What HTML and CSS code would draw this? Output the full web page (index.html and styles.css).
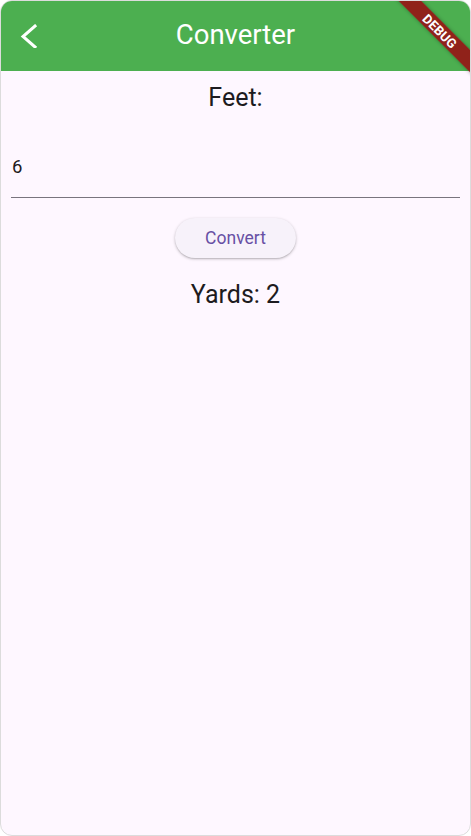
FILE: index.html
```html
<!DOCTYPE html>
<html>
<head>
<meta charset="utf-8">
<link rel="stylesheet" href="styles.css">
</head>
<body>
<div class="frame">
  <header class="appbar">
    <button class="back" aria-label="Back">
      <svg width="24" height="24" viewBox="0 0 24 24"><polyline points="16,2 4,12.5 16,23" fill="none" stroke="#fff" stroke-width="3" stroke-linecap="square"/></svg>
    </button>
    <h1 class="title">Converter</h1>
  </header>
  <div class="banner"><span>DEBUG</span></div>
  <main class="content">
    <div class="label">Feet:</div>
    <div class="field"><span class="value">6</span></div>
    <button class="convert">Convert</button>
    <div class="result">Yards: 2</div>
  </main>
</div>
</body>
</html>
```

FILE: styles.css
```css
* { box-sizing: border-box; }
html, body { margin: 0; padding: 0; background: #fff; }
body { font-family: Roboto, "Noto Sans", sans-serif; }

.frame {
  position: relative;
  width: 471px;
  height: 836px;
  border: 1px solid #dcdcdc;
  border-radius: 12px;
  overflow: hidden;
  background: #fef7ff;
  display: flex;
  flex-direction: column;
}

.appbar {
  height: 70px;
  background: #4caf50;
  display: flex;
  align-items: center;
  justify-content: center;
  position: relative;
  flex-shrink: 0;
}

.back {
  position: absolute;
  left: 18px;
  top: 23px;
  width: 24px;
  height: 24px;
  padding: 0;
  border: 0;
  background: none;
  display: flex;
}

.title {
  margin: 0;
  color: #fff;
  font-size: 27.5px;
  font-weight: 400;
  line-height: 1;
  position: relative;
  top: -1px;
}

.banner {
  position: absolute;
  top: 0;
  right: 0;
  width: 130px;
  height: 16px;
  background: rgba(150, 22, 22, 0.92);
  color: #fff;
  transform-origin: center;
  transform: translate(35px, 22px) rotate(45deg);
  display: flex;
  align-items: center;
  justify-content: center;
  box-shadow: 0 0 4px rgba(0,0,0,0.35);
}
.banner span {
  font-size: 13px;
  font-weight: 700;
  letter-spacing: 0.1px;
  line-height: 1;
}

.content {
  display: flex;
  flex-direction: column;
  align-items: center;
  padding: 0 10px;
}

.label {
  margin-top: 12px;
  font-size: 25px;
  line-height: 30px;
  color: #1d1b20;
}

.field {
  align-self: stretch;
  margin-top: 30px;
  height: 55px;
  border-bottom: 1px solid #79747e;
  display: flex;
  align-items: center;
  padding: 0 1px 6px;
}
.value {
  font-size: 18.5px;
  color: #1d1b20;
}

.convert {
  margin-top: 20px;
  height: 40px;
  padding: 0 30px;
  border: 0;
  border-radius: 20px;
  background: #f7f2fa;
  color: #6750a4;
  font-family: Roboto, sans-serif;
  font-size: 17.5px;
  box-shadow: 0 1px 3px rgba(0,0,0,0.25), 0 1px 1px rgba(0,0,0,0.08);
}

.result {
  margin-top: 22px;
  font-size: 25px;
  line-height: 30px;
  color: #1d1b20;
}
```
